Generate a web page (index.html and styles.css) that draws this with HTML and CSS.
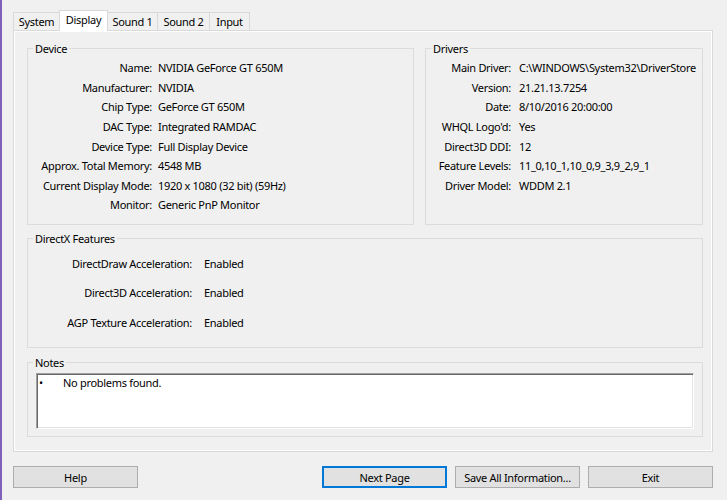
FILE: index.html
```html
<!DOCTYPE html>
<html lang="en">
<head>
    <meta charset="UTF-8">
    <title>DirectX Diagnostic Tool - Display</title>
    <link rel="stylesheet" href="styles.css">
</head>
<body>
    <div class="window">
        <div class="tabs">
            <div class="tab tab-system">System</div>
            <div class="tab tab-display active">Display</div>
            <div class="tab tab-sound1">Sound 1</div>
            <div class="tab tab-sound2">Sound 2</div>
            <div class="tab tab-input">Input</div>
        </div>

        <div class="panel">
            <div class="top-row">
                <div class="group">
                    <div class="group-title">Device</div>
                    <div class="fields device-fields">
                        <span class="label">Name:</span><span class="value">NVIDIA GeForce GT 650M</span>
                        <span class="label">Manufacturer:</span><span class="value">NVIDIA</span>
                        <span class="label">Chip Type:</span><span class="value">GeForce GT 650M</span>
                        <span class="label">DAC Type:</span><span class="value">Integrated RAMDAC</span>
                        <span class="label">Device Type:</span><span class="value">Full Display Device</span>
                        <span class="label">Approx. Total Memory:</span><span class="value">4548 MB</span>
                        <span class="label">Current Display Mode:</span><span class="value">1920 x 1080 (32 bit) (59Hz)</span>
                        <span class="label">Monitor:</span><span class="value">Generic PnP Monitor</span>
                    </div>
                </div>
                <div class="group">
                    <div class="group-title">Drivers</div>
                    <div class="fields driver-fields">
                        <span class="label">Main Driver:</span><span class="value">C:\WINDOWS\System32\DriverStore</span>
                        <span class="label">Version:</span><span class="value">21.21.13.7254</span>
                        <span class="label">Date:</span><span class="value">8/10/2016 20:00:00</span>
                        <span class="label">WHQL Logo'd:</span><span class="value">Yes</span>
                        <span class="label">Direct3D DDI:</span><span class="value">12</span>
                        <span class="label">Feature Levels:</span><span class="value">11_0,10_1,10_0,9_3,9_2,9_1</span>
                        <span class="label">Driver Model:</span><span class="value">WDDM 2.1</span>
                    </div>
                </div>
            </div>

            <div class="group features">
                <div class="group-title">DirectX Features</div>
                <div class="fields feature-fields">
                    <span class="label">DirectDraw Acceleration:</span><span class="value">Enabled</span>
                    <span class="label">Direct3D Acceleration:</span><span class="value">Enabled</span>
                    <span class="label">AGP Texture Acceleration:</span><span class="value">Enabled</span>
                </div>
            </div>

            <div class="group notes">
                <div class="group-title">Notes</div>
                <div class="notes-box">
                    <div class="note"><span class="bullet">&bull;</span>No problems found.</div>
                </div>
            </div>
        </div>

        <div class="buttons">
            <button class="btn btn-help">Help</button>
            <button class="btn default">Next Page</button>
            <button class="btn">Save All Information...</button>
            <button class="btn">Exit</button>
        </div>
    </div>
</body>
</html>
```

FILE: styles.css
```css
body {
    margin: 0;
    height: 500px;
    box-sizing: border-box;
    background: #f0f0f0;
    border-left: 2px solid #7f61b9;
    font-family: "Noto Sans", sans-serif;
    font-size: 11px;
    letter-spacing: -0.3px;
    color: #000;
    overflow: hidden;
}
.window {
    width: 700px;
    padding: 10px 0 0 11px;
}

/* tabs */
.tabs {
    display: flex;
    align-items: flex-end;
    height: 21px;
    margin-bottom: -1px;
    position: relative;
    z-index: 1;
}
.tab {
    box-sizing: border-box;
    height: 18px;
    margin-bottom: 1px;
    margin-right: -1px;
    border: 1px solid #d9d9d9;
    border-bottom: none;
    background: #f0f0f0;
    text-align: center;
    line-height: 17px;
    white-space: nowrap;
}
.tab.active {
    height: 21px;
    margin-bottom: 0;
    background: #fff;
    line-height: 18px;
    position: relative;
    z-index: 2;
}
.tab-system { width: 47px; }
.tab-display { width: 49px; }
.tab-sound1 { width: 51px; }
.tab-sound2 { width: 53px; }
.tab-input { width: 41px; }

/* page */
.panel {
    box-sizing: border-box;
    height: 422px;
    border: 1px solid #d9d9d9;
    box-shadow: inset 0 0 0 1px #fff;
    padding: 17px 9px 0 13px;
}
.top-row {
    display: grid;
    grid-template-columns: 387px 278px;
    column-gap: 11px;
}
.group {
    box-sizing: border-box;
    border: 1px solid #dcdcdc;
    height: 177px;
}
.group-title {
    display: table;
    margin: -8px 0 0 5px;
    padding: 0 2px;
    line-height: 15px;
    background: #f0f0f0;
}

.fields {
    display: grid;
    align-items: center;
    white-space: nowrap;
}
.label {
    text-align: right;
}
.device-fields {
    grid-template-columns: 124px 1fr;
    grid-auto-rows: 19.6px;
    column-gap: 6px;
    margin-top: 2px;
}
.driver-fields {
    grid-template-columns: 85px 1fr;
    grid-auto-rows: 19.6px;
    column-gap: 8px;
    margin-top: 2px;
}

.features {
    width: 676px;
    height: 110px;
    margin-top: 13px;
}
.feature-fields {
    grid-template-columns: 164px 1fr;
    grid-auto-rows: 20px;
    row-gap: 9.5px;
    column-gap: 12px;
    margin-top: 7px;
}

.notes {
    width: 676px;
    height: 75px;
    margin-top: 14px;
}
.notes-box {
    box-sizing: border-box;
    width: 658px;
    height: 56px;
    margin: 3px 0 0 8px;
    background: #fff;
    border: 1px solid;
    border-color: #a0a0a0 #fff #fff #a0a0a0;
    box-shadow: inset 1px 1px #696969, inset -1px -1px #e3e3e3;
    padding: 1px 0 0 2px;
}
.note {
    line-height: 15px;
}
.bullet {
    display: inline-block;
    width: 24px;
}

/* bottom buttons */
.buttons {
    display: flex;
    gap: 8px;
    margin-top: 14px;
}
.btn {
    box-sizing: border-box;
    width: 125px;
    height: 22px;
    padding: 0;
    background: #e1e1e1;
    border: 1px solid #adadad;
    font-family: inherit;
    font-size: 11px;
    letter-spacing: inherit;
    color: #000;
    white-space: nowrap;
}
.btn-help {
    margin-right: auto;
}
.btn.default {
    border: 2px solid #0078d7;
}
```
